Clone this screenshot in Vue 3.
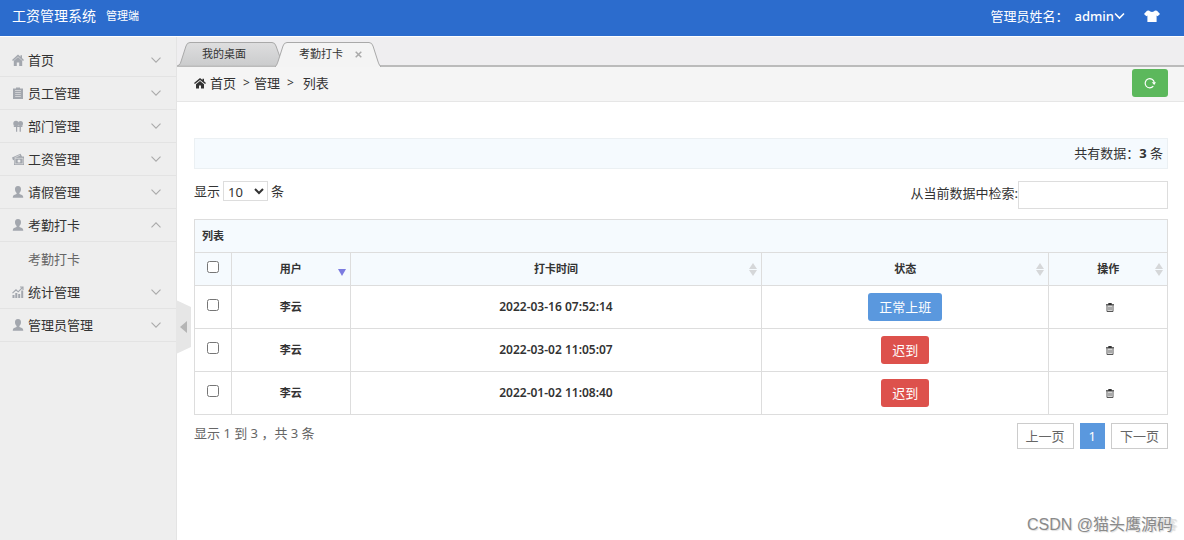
<script setup>
import { ref } from 'vue'

const menu = [
  { label: '首页', icon: 'home' },
  { label: '员工管理', icon: 'clipboard' },
  { label: '部门管理', icon: 'group' },
  { label: '工资管理', icon: 'money' },
  { label: '请假管理', icon: 'user' },
  { label: '考勤打卡', icon: 'user', children: ['考勤打卡'] },
  { label: '统计管理', icon: 'chart' },
  { label: '管理员管理', icon: 'user' },
]

const rows = [
  { user: '李云', time: '2022-03-16 07:52:14', status: '正常上班', kind: 'primary' },
  { user: '李云', time: '2022-03-02 11:05:07', status: '迟到', kind: 'danger' },
  { user: '李云', time: '2022-01-02 11:08:40', status: '迟到', kind: 'danger' },
]

const pageSize = ref('10')
const keyword = ref('')
</script>

<template>
  <div class="page">
    <header class="top">
      <a class="brand" href="#">工资管理系统</a>
      <span class="edition">管理端</span>
      <span class="spacer"></span>
      <span class="who">管理员姓名：</span>
      <button class="account" type="button">
        admin
        <svg width="11" height="12" viewBox="0 0 11 12"><path d="M1 3.5 5.5 8 10 3.5" fill="none" stroke="#fff" stroke-width="1.6" /></svg>
      </button>
      <button class="skin" type="button" aria-label="换肤">
        <svg width="16" height="12" viewBox="0 0 16 12"><path d="M5 .5C6 2.4 10 2.4 11 .5L13 .8 16 4 13.6 6.2 12.6 5.4V12H3.4V5.4L2.4 6.2 0 4 3 .8Z" fill="#fff" /></svg>
      </button>
    </header>

    <div class="body">
      <nav class="side">
        <template v-for="item in menu" :key="item.label">
          <button class="item" type="button">
            <svg class="mi" width="12" height="12" viewBox="0 0 12 12">
              <g v-if="item.icon === 'home'">
                <path d="M6 .5 0 6l1 1 5-4.500L11 7l1-1-2-1.900V1.200H8.500v1.600Z" />
                <path d="M6 3 1.800 6.800V12H4.800V8.400H7.200V12H10.200V6.800Z" />
              </g>
              <g v-else-if="item.icon === 'clipboard'">
                <path d="M1 1.500h3V.6h4v.9h3V12H1Z" />
                <path d="M3 3.500h6M3.200 5.500h5.600M3.200 7.500h5.600M3.200 9.500h5.600" stroke="#eee" stroke-width=".6" />
              </g>
              <g v-else-if="item.icon === 'group'">
                <circle cx="4" cy="3.400" r="2.700" />
                <circle cx="8.500" cy="3.400" r="2.500" />
                <path d="M1.800 5.400h8.600V7H8.900v4.800H7.600V7H5.200v4.800H4V7H1.800Z" />
              </g>
              <g v-else-if="item.icon === 'money'">
                <path d="M0 4.500 8.500.7 10 3.500h2V12H2V7L1 7.200Z" />
                <path d="M2.500 4.700 8 2.200M3 5.300h8v5.500H3Z" fill="none" stroke="#eee" stroke-width=".6" />
                <circle cx="7" cy="8" r="1.500" fill="#eee" />
              </g>
              <g v-else-if="item.icon === 'chart'">
                <path d="M.5 9h2v3h-2ZM3.300 7h2v5h-2ZM6.200 8h2v4h-2ZM9.200 4.500h2V12h-2Z" />
                <path d="M.5 7.200 4 3.800 6.200 5.800 10.500 1.500M8 1h3v3" fill="none" stroke="#a3a7ae" stroke-width="1.100" />
              </g>
              <path v-else d="M6 0C3.700 0 3 1.500 3 3.300 3 5 3.800 6.200 4.600 7v1C3 8.600.8 9 .8 11v.8h10.400V11C11.200 9 9 8.600 7.400 8V7C8.200 6.200 9 5 9 3.300 9 1.500 8.300 0 6 0Z" />
            </svg>
            <span>{{ item.label }}</span>
            <svg class="arrow" width="10" height="6" viewBox="0 0 10 6">
              <path :d="item.children ? 'M.5 5.3 5 .8 9.5 5.3' : 'M.5.7 5 5.2 9.5.7'" fill="none" stroke="#aaa" stroke-width="1.100" />
            </svg>
          </button>
          <a v-for="child in item.children" :key="child" class="sub" href="#">{{ child }}</a>
        </template>
        <button class="fold" type="button" aria-label="收起菜单">
          <svg width="15" height="54" viewBox="0 0 15 54">
            <path d="M0 0 15 7V47L0 54Z" fill="#e6e6e6" />
            <path d="M11 21V33L4 27Z" fill="#b5b5b5" />
          </svg>
        </button>
      </nav>

      <main class="main">
        <div class="tabs">
          <button class="tab" type="button">
            <svg class="shape" width="106" height="24" viewBox="0 0 106 24">
              <defs>
                <linearGradient id="tabfill" x1="0" y1="0" x2="0" y2="1">
                  <stop offset="0" stop-color="#dededf" />
                  <stop offset="1" stop-color="#cbcccd" />
                </linearGradient>
              </defs>
              <path d="M0 23.500C2 23 2.500 21 3.500 18L8 4Q9 .5 12 .5H94Q97 .5 98 4L105 23.500" fill="url(#tabfill)" stroke="#a9a9a9" />
            </svg>
            <span>我的桌面</span>
          </button>
          <button class="tab active" type="button">
            <svg class="shape" width="106" height="25" viewBox="0 0 106 25">
              <path d="M0 25C2 23 2.500 21 3.500 18L8 4Q9 .5 12 .5H94Q97 .5 98 4L102.500 18C103.500 21 104 23 106 25" fill="#f4f4f4" stroke="#a9a9a9" />
            </svg>
            <span>考勤打卡</span>
            <svg class="close" width="7" height="7" viewBox="0 0 7 7"><path d="M.7.7 6.300 6.300M6.300.7.7 6.300" stroke="#aaa" stroke-width="1.500" /></svg>
          </button>
        </div>

        <div class="crumbs">
          <svg width="12" height="11" viewBox="0 0 12 11">
            <path d="M6 0 0 5l.9 1L6 1.900 11.100 6 12 5 10 3.300V.7H8.500V2Z" fill="#333" />
            <path d="M6 3 2 6.200V10.500H5V7.500H7V10.500H10V6.200Z" fill="#333" />
          </svg>
          <a href="#">首页</a>
          <span class="sep">&gt;</span>
          <a href="#">管理</a>
          <span class="sep wide">&gt;</span>
          <span>列表</span>
          <button class="refresh" type="button" aria-label="刷新">
            <svg width="12" height="12" viewBox="0 0 12 12">
              <path d="M9.300 9.200A4.600 4.600 0 1 1 10.300 5.600" fill="none" stroke="#fff" stroke-width="1.200" />
              <path d="M7.800 5.200H12L10.200 7.900Z" fill="#fff" />
            </svg>
          </button>
        </div>

        <section class="content">
          <div class="summary">共有数据：<strong>3</strong> 条</div>

          <div class="tools">
            <label class="length">
              显示
              <select v-model="pageSize">
                <option>10</option>
                <option>25</option>
                <option>50</option>
              </select>
              条
            </label>
            <label class="search">
              <span>从当前数据中检索:</span><input v-model="keyword" type="text" />
            </label>
          </div>

          <table>
            <colgroup>
              <col class="c-check" /><col class="c-user" /><col class="c-time" /><col class="c-status" /><col class="c-op" />
            </colgroup>
            <thead>
              <tr><th class="title" colspan="5">列表</th></tr>
              <tr>
                <th class="check"><input type="checkbox" aria-label="全选" /></th>
                <th>
                  用户
                  <svg class="sort low" width="8" height="7" viewBox="0 0 8 7"><path d="M0 0H8L4 7Z" fill="#7b7be0" /></svg>
                </th>
                <th v-for="name in ['打卡时间', '状态', '操作']" :key="name">
                  {{ name }}
                  <svg class="sort" width="8" height="13" viewBox="0 0 8 13"><path d="M0 6H8L4 0ZM0 7H8L4 13Z" fill="#d5d7d9" /></svg>
                </th>
              </tr>
            </thead>
            <tbody>
              <tr v-for="row in rows" :key="row.time">
                <td class="check"><input type="checkbox" :aria-label="row.time" /></td>
                <td>{{ row.user }}</td>
                <td class="time">{{ row.time }}</td>
                <td><button class="status" :class="row.kind" type="button">{{ row.status }}</button></td>
                <td>
                  <button class="trash" type="button" aria-label="删除">
                    <svg width="8" height="9" viewBox="0 0 8 9">
                      <path d="M0 1.200H2.300V0H5.700V1.200H8V2.600H0Z" fill="#333" />
                      <path d="M1 2.600V8.500H7V2.600M3 3.500V7.500M5 3.500V7.500" fill="none" stroke="#555" />
                    </svg>
                  </button>
                </td>
              </tr>
            </tbody>
          </table>

          <footer class="foot">
            <span>显示 1 到 3 ，共 3 条</span>
            <div class="pager">
              <button type="button">上一页</button>
              <button class="current" type="button">1</button>
              <button type="button">下一页</button>
            </div>
          </footer>
        </section>
      </main>
    </div>
    <div class="mark"><span class="ghost">博客</span>CSDN @猫头鹰源码</div>
  </div>
</template>

<style>
body {
  background: #fff;
}
</style>

<style scoped>
.page {
  position: relative;
  display: flex;
  flex-direction: column;
  min-height: 100vh;
  font: 13px/20px "Noto Sans", "Noto Sans CJK SC", sans-serif;
  color: #333;
}
.page * {
  box-sizing: border-box;
}
button,
input,
select {
  font: inherit;
  color: inherit;
}
button {
  margin: 0;
  padding: 0;
  border: 0;
  background: none;
}
a {
  color: inherit;
  text-decoration: none;
}
svg {
  display: block;
  flex: none;
}
.top {
  display: flex;
  align-items: center;
  height: 36px;
  padding: 0 24px 4px 12px;
  background: #2c6ccd;
  color: #fff;
}
.brand {
  font-size: 14px;
}
.edition {
  margin-left: 10px;
  font-size: 11px;
}
.spacer {
  flex: 1;
}
.account {
  display: flex;
  align-items: center;
  margin: 0 19px 0 6px;
  font-weight: 500;
}
.body {
  display: flex;
  flex: 1;
  border-top: 1px solid #fff;
}
.side {
  position: relative;
  width: 177px;
  flex: none;
  padding-top: 7px;
  background: #eee;
  border-right: 1px solid #e4e4e4;
}
.item {
  display: flex;
  align-items: center;
  width: 100%;
  height: 33px;
  padding: 0 15px 0 12px;
  border-bottom: 1px solid #e3e3e3;
}
.mi {
  margin-right: 4px;
  fill: #a3a7ae;
}
.arrow {
  margin-left: auto;
}
.sub {
  display: block;
  padding: 7px 28px;
  color: #666;
}
.fold {
  position: absolute;
  top: 263px;
  left: 176px;
}
.main {
  flex: 1;
  min-width: 0;
}
.tabs {
  display: flex;
  height: 30px;
  padding: 5px 0 0 1px;
  background: #efeef0;
  border-bottom: 2px solid #bbb;
}
.tab {
  position: relative;
  display: flex;
  align-items: center;
  width: 97px;
  height: 24px;
  padding-left: 24px;
  font-size: 11px;
}
.tab span,
.close {
  position: relative;
}
.close {
  margin-left: 12px;
}
.shape {
  position: absolute;
  top: 0;
  left: 0;
}
.crumbs {
  display: flex;
  align-items: center;
  height: 35px;
  padding: 0 16px 2px 17px;
  background: #f5f5f5;
  border-bottom: 1px solid #e6e6e6;
}
.crumbs a:first-of-type {
  margin-left: 4px;
}
.sep {
  margin: 0 4px 0 7px;
  font-size: 12px;
}
.sep.wide {
  margin-right: 9px;
}
.refresh {
  display: grid;
  place-items: center;
  width: 36px;
  height: 28px;
  margin-left: auto;
  border-radius: 3px;
  background: #5cb85c;
}
.content {
  padding: 36px 16px 0 17px;
}
.summary {
  padding: 4px 4px 5px;
  border: 1px solid #ebf0f3;
  background: #f5fafe;
  text-align: right;
}
.tools {
  display: flex;
  justify-content: space-between;
  align-items: flex-start;
  margin: 12px 0 10px;
}
.length,
.search {
  display: flex;
  align-items: center;
}
.length {
  gap: 3px;
}
.length select {
  width: 45px;
  height: 20px;
  padding: 0;
  border: 1px solid #ddd;
  background: #fff;
}
.search span {
  padding-bottom: 4px;
}
.search input {
  width: 150px;
  height: 28px;
  border: 1px solid #ddd;
}
table {
  width: 100%;
  table-layout: fixed;
  border-collapse: collapse;
  font-size: 11px;
  font-weight: 700;
  line-height: 16px;
  text-align: center;
}
.c-check {
  width: 3.8%;
}
.c-user,
.c-op {
  width: 12.2%;
}
.c-status {
  width: 29.5%;
}
th,
td {
  position: relative;
  padding: 0;
  border: 1px solid #ddd;
}
th {
  height: 33px;
  background: #f5fafe;
}
td {
  height: 43px;
}
td.time {
  font-size: 12px;
  font-weight: 600;
}
th.title {
  padding-left: 7px;
  text-align: left;
}
.check input {
  display: block;
  width: 12px;
  height: 12px;
  margin: 0 auto 5px;
}
.sort {
  position: absolute;
  top: 10px;
  right: 4px;
}
.sort.low {
  top: 16px;
}
.status {
  height: 28px;
  padding: 0 11px;
  border-radius: 3px;
  color: #fff;
  font-size: 13px;
  font-weight: 400;
}
.primary {
  background: #5a98de;
}
.danger {
  background: #dd514c;
}
.trash {
  display: block;
  margin: 0 auto;
  padding-left: 4px;
}
.foot {
  display: flex;
  justify-content: space-between;
  align-items: flex-start;
  padding-top: 8px;
  color: #666;
}
.pager {
  display: flex;
  gap: 6px;
}
.pager button {
  height: 26px;
  padding: 0 8px;
  border: 1px solid #ccc;
}
.pager .current {
  border-color: #5a98de;
  background: #5a98de;
  color: #fff;
}
.mark {
  position: absolute;
  right: 11px;
  bottom: 5px;
  color: #8a8a8a;
  font-family: "Liberation Sans", "Noto Sans CJK SC", sans-serif;
  font-size: 16px;
  text-shadow: 1px 1px 1px #ddd;
}
.ghost {
  position: absolute;
  right: -4px;
  z-index: -1;
  color: #ddd;
  font-size: 12px;
}
</style>
